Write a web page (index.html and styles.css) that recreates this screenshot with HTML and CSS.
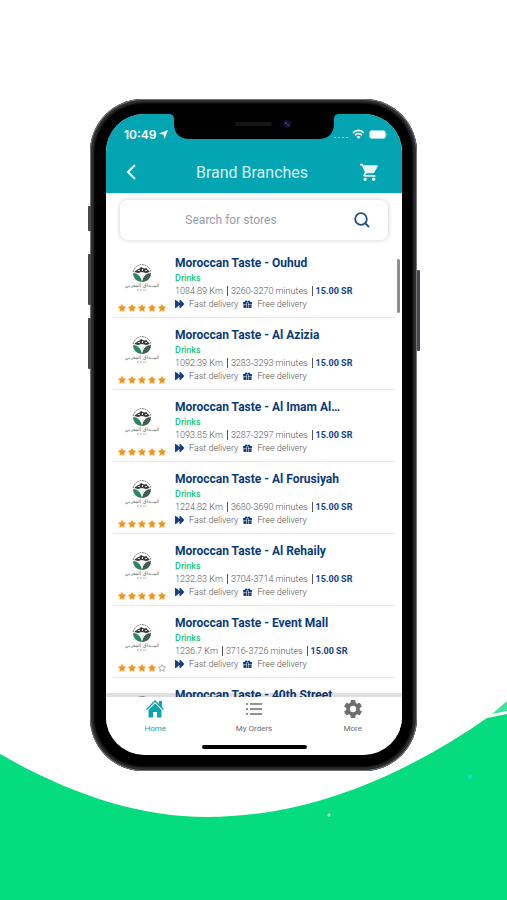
FILE: index.html
```
<!DOCTYPE html>
<html lang="en">
<head>
    <meta charset="UTF-8">
    <meta name="viewport" content="width=device-width, initial-scale=1.0">
    <title>Brand Branches</title>
    <link rel="stylesheet" href="styles.css">
</head>
<body>
    <!-- Shared icons -->
    <svg class="sprite" aria-hidden="true">
        <symbol id="star" viewBox="0 0 24 24">
            <path d="M12 1.5l3.2 7 7.6.8-5.7 5.1 1.6 7.5L12 18l-6.7 3.9 1.6-7.5L1.2 9.3l7.6-.8z" stroke-width="2"/>
        </symbol>
        <symbol id="fast" viewBox="0 0 18 16">
            <path d="M0 0h2l7 6V0h2l7 7v2l-7 7H9v-6l-7 6H0z"/>
        </symbol>
        <symbol id="gift" viewBox="0 0 18 16">
            <path d="M1 4h3C2 1 6-1 9 3c3-4 7-2 5 1h3c1 0 1 1 1 1v4h-7V5H7v4H0V5c0-1 1-1 1-1zM1 10h6v6H2c-1 0-1-1-1-1zM11 10h6v5s0 1-1 1h-5zM8 6h2v10H8z"/>
        </symbol>
        <symbol id="brand" viewBox="0 0 34 28">
            <path d="M8 9C11-1 23-1 26 9" fill="none" stroke="#8a8a8a" stroke-width="1" stroke-dasharray="2 .5"/>
            <path d="M9 9c2-1 3-3 5-3l2-2 3 1.500 2-.5 4 4-4 1-4-1-4 1z" fill="#3c3c3c"/>
            <path d="M13 7h2v1h-2zM17 6h1v2h-1zM20 7h2v1h-2z" fill="#ddd"/>
            <path d="M8 10c4 0 8 3 9 9-5 0-9-4-9-9z" fill="#2c8560"/>
            <path d="M26 10c-4 0-8 3-9 9 5 0 9-4 9-9z" fill="#3f5a50"/>
            <path d="M13 10.500c2 1 4 3 4 6M21 10.500c-2 1-4 3-4 6" fill="none" stroke="#dcebe4" stroke-width="1"/>
            <text x="17" y="24" text-anchor="middle" class="brand-name">المــذاق المغربي</text>
            <path d="M12 27h10" stroke="#aaa" stroke-width="1" stroke-dasharray="2 1"/>
        </symbol>
    </svg>

    <svg class="wave" viewBox="0 0 507 210" preserveAspectRatio="none" aria-hidden="true">
        <path d="M0 64C70 104 138 127 207 127C310 127 405 85 487 28L507 24V210H0Z" fill="#04dc7e"/>
        <path d="M492 24L507 11V21Z" fill="#3fe49b"/>
        <circle cx="329" cy="125" r="1.500" fill="#d9ffec"/>
        <circle cx="470" cy="87" r="2.500" fill="#04e6b0"/>
    </svg>

    <main class="phone">
        <span class="key key-mute"></span>
        <span class="key key-up"></span>
        <span class="key key-down"></span>
        <span class="key key-power"></span>
        <div class="screen">
            <svg class="notch" viewBox="0 0 170 25" aria-hidden="true">
                <path d="M0 0H170Q165 0 165 5V9Q165 25 149 25H21Q5 25 5 9V5Q5 0 0 0Z" fill="#000"/>
                <rect x="66" y="8" width="37" height="4" rx="2" fill="#161616"/>
                <circle cx="118" cy="10" r="4" fill="#10132c"/>
                <circle cx="117" cy="9" r="1" fill="#3f4c9c"/>
                <circle cx="119" cy="11" r="1" fill="#35418a"/>
            </svg>

            <header class="header">
                <div class="status-bar">
                    <span class="time">10:49
                        <svg width="9" height="9" viewBox="0 0 10 10"><path d="M10 0L6 10 5 5 0 4z" fill="#fff"/></svg>
                    </span>
                    <span class="signals">
                        <svg width="14" height="10" viewBox="0 0 14 10"><path d="M0 8.500h14" stroke="#7fd0d6" stroke-width="1" stroke-dasharray="2 2"/></svg>
                        <svg width="13" height="10" viewBox="0 0 13 10" fill="none" stroke="#fff" stroke-width="1.800"><path d="M1 4C4 .5 9 .5 12 4M3 6.200c2-2.200 5-2.200 7 0"/><path d="M6.500 10l-2-2.200c1-1 3-1 4 0z" fill="#fff" stroke="none"/></svg>
                        <svg width="19" height="9" viewBox="0 0 19 9"><rect x=".5" y=".5" width="16" height="8" rx="2.500" fill="#fff" stroke="#8fd8dc"/><path d="M17.500 3q1.500 1.500 0 3z" fill="#c5ecee"/></svg>
                    </span>
                </div>
                <div class="title-bar">
                    <button class="icon-button" aria-label="Back">
                        <svg width="10" height="16" viewBox="0 0 10 16"><path d="M9 1L2 8l7 7" fill="none" stroke="#e8fafa" stroke-width="2"/></svg>
                    </button>
                    <h1>Brand Branches</h1>
                    <button class="icon-button" aria-label="Cart">
                        <svg width="18" height="18" viewBox="1 1 21 21" fill="#e6f3f0"><path d="M7 18c-1.100 0-2 .9-2 2s.9 2 2 2 2-.9 2-2-.9-2-2-2zM1 2v2h2l3.600 7.600L5.200 14c-.8 1.400.2 3 1.800 3h12v-2H7.400l1.100-2h7.500c.7 0 1.400-.4 1.700-1L21.700 5c.3-.5 0-1-.7-1H5.200l-.9-2H1zm16 16c-1.100 0-2 .9-2 2s.9 2 2 2 2-.9 2-2-.9-2-2-2z"/><path d="M5 4h16l-4 8H8z"/></svg>
                    </button>
                </div>
            </header>

            <form class="search" onsubmit="event.preventDefault()">
                <input type="search" placeholder="Search for stores" aria-label="Search for stores">
                <button class="icon-button" aria-label="Search">
                    <svg width="16" height="16" viewBox="0 0 16 16" fill="none" stroke="#1d4f87" stroke-width="1.800"><circle cx="7" cy="7" r="5.800"/><path d="M11 11l4 4"/></svg>
                </button>
            </form>

            <div class="list-wrap">
                <ul class="branch-list" id="branch-list"></ul>
                <span class="scroll-thumb"></span>
            </div>

            <nav class="tabs">
                <a href="#home" class="active">
                    <svg width="18" height="18" viewBox="0 0 18 18" fill="currentColor"><path d="M9 0l4 4V1h3v6l2 2-1 1-8-8-8 8-1-1z"/><path d="M9 3.500l6.500 6.500v7.500H11V12H7v5.500H2.500V10z"/></svg>
                    Home
                </a>
                <a href="#orders">
                    <svg width="18" height="18" viewBox="0 0 18 18"><path d="M1 4h2M1 9h2M1 14h2M5 4h12M5 9h12M5 14h12" stroke="currentColor" stroke-width="1.400"/></svg>
                    My Orders
                </a>
                <a href="#more">
                    <svg width="18" height="18" viewBox="2 2 20 20" fill="currentColor"><path d="M19.430 12.980c.04-.32.070-.64.070-.98s-.03-.66-.07-.98l2.110-1.650c.19-.15.24-.42.120-.64l-2-3.460c-.12-.22-.39-.3-.61-.22l-2.490 1c-.52-.4-1.080-.73-1.690-.98l-.38-2.650A.49.49 0 0 0 14 2h-4c-.25 0-.46.18-.49.42l-.38 2.650c-.61.25-1.170.59-1.690.98l-2.490-1c-.23-.09-.49 0-.61.22l-2 3.460c-.13.22-.07.49.120.64l2.110 1.650c-.04.32-.07.65-.07.98s.03.66.070.98l-2.110 1.650c-.19.15-.24.42-.12.64l2 3.460c.12.22.39.3.61.22l2.490-1c.52.4 1.080.73 1.690.98l.38 2.650c.03.24.24.42.49.42h4c.25 0 .46-.18.49-.42l.38-2.650c.61-.25 1.170-.59 1.690-.98l2.490 1c.23.09.49 0 .61-.22l2-3.460c.12-.22.070-.49-.12-.64zM12 15.500a3.500 3.500 0 1 1 0-7 3.500 3.500 0 0 1 0 7z"/></svg>
                    More
                </a>
            </nav>
            <div class="home-bar"></div>
        </div>
    </main>

    <script>
        const branches = [
            { name: "Ouhud", distance: "1084.89", time: "3260-3270", stars: 5 },
            { name: "Al Azizia", distance: "1092.39", time: "3283-3293", stars: 5 },
            { name: "Al Imam Al…", distance: "1093.85", time: "3287-3297", stars: 5 },
            { name: "Al Forusiyah", distance: "1224.82", time: "3680-3690", stars: 5 },
            { name: "Al Rehaily", distance: "1232.83", time: "3704-3714", stars: 5 },
            { name: "Event Mall", distance: "1236.7", time: "3716-3726", stars: 4 },
            { name: "40th Street" }
        ];

        const branchList = document.getElementById('branch-list');

        function starIcons(count) {
            let html = '';
            for (let i = 1; i <= 5; i++) {
                html += `<svg class="${i <= count ? 'full' : 'empty'}"><use href="#star"/></svg>`;
            }
            return html;
        }

        function branchDetails(branch) {
            return `
                <p class="category">Drinks</p>
                <p class="meta"><span>${branch.distance} Km</span><span>${branch.time} minutes</span><strong>15.00 SR</strong></p>
                <p class="delivery">
                    <svg><use href="#fast"/></svg><span>Fast delivery</span>
                    <svg><use href="#gift"/></svg><span>Free delivery</span>
                </p>
            `;
        }

        branches.forEach(branch => {
            const li = document.createElement('li');
            li.className = 'branch';
            li.innerHTML = `
                <div class="brand">
                    <svg class="logo"><use href="#brand"/></svg>
                    <div class="stars" role="img" aria-label="${branch.stars || 0} of 5 stars">${starIcons(branch.stars)}</div>
                </div>
                <div class="info">
                    <h2>Moroccan Taste - ${branch.name}</h2>
                    ${branch.distance ? branchDetails(branch) : ''}
                </div>
            `;
            branchList.appendChild(li);
        });
    </script>
</body>
</html>
```
FILE: styles.css
```
* {
    box-sizing: border-box;
}
body {
    font-family: Roboto, "Liberation Sans", sans-serif;
    background-color: #fff;
    margin: 0;
    min-height: 100vh;
    padding: 99px 90px;
    position: relative;
}
h1, h2, p, ul {
    margin: 0;
    padding: 0;
}
svg {
    display: block;
    flex: none;
}
.sprite {
    position: absolute;
    width: 0;
    height: 0;
}
.wave {
    position: absolute;
    left: 0;
    bottom: 0;
    width: 100%;
    height: 210px;
}

/* Phone body */
.phone {
    position: relative;
    max-width: 360px;
    margin: 0 auto;
    padding: 15px 15px 16px 16px;
    border-radius: 53px;
    background-color: #000;
    box-shadow: inset 0 0 0 1px #737579, inset 0 0 2px 4px #2e2f31;
}
.key {
    position: absolute;
    left: -2px;
    width: 3px;
    border-radius: 1px;
    background-color: #47484b;
}
.key-mute {
    top: 107px;
    height: 25px;
}
.key-up {
    top: 155px;
    height: 51px;
}
.key-down {
    top: 219px;
    height: 51px;
}
.key-power {
    left: auto;
    right: -3px;
    top: 171px;
    height: 81px;
}
.screen {
    position: relative;
    overflow: hidden;
    border-radius: 38px;
    background-color: #fff;
}
.notch {
    position: absolute;
    top: 0;
    left: 50%;
    width: 170px;
    height: 25px;
    transform: translateX(-50%);
}

/* Header */
.icon-button {
    display: flex;
    padding: 0;
    border: none;
    background: none;
    cursor: pointer;
}
.header {
    background-color: #04a5b3;
    color: #fff;
}
.status-bar {
    display: flex;
    justify-content: space-between;
    align-items: center;
    height: 37px;
    padding: 3px 14px 0 18px;
}
.time {
    display: flex;
    align-items: center;
    gap: 3px;
    font-family: Inter, sans-serif;
    font-size: 12px;
    font-weight: 600;
}
.signals {
    display: flex;
    align-items: center;
    gap: 4px;
}
.title-bar {
    display: grid;
    grid-template-columns: 1fr auto 1fr;
    align-items: center;
    height: 42px;
    padding: 0 24px 0 20px;
}
.title-bar h1 {
    font-size: 16px;
    font-weight: 400;
    color: #d3f1f2;
}
.title-bar .icon-button:last-child {
    justify-self: end;
}

/* Search */
.search {
    display: flex;
    align-items: center;
    height: 40px;
    margin: 7px 14px 6px;
    padding-right: 18px;
    border-radius: 8px;
    background-color: #fff;
    box-shadow: 0 0 4px 1px #dcdcdc;
}
.search input {
    flex: 1;
    min-width: 0;
    height: 100%;
    padding: 0 16px;
    border: none;
    outline: none;
    background: none;
    font-family: inherit;
    font-size: 12px;
    text-align: center;
    color: #1d4f87;
}
.search input::placeholder {
    color: #969eac;
}

/* Branches */
.list-wrap {
    position: relative;
}
.branch-list {
    height: 451px;
    overflow: hidden;
    list-style-type: none;
}
.scroll-thumb {
    position: absolute;
    top: 13px;
    right: 2px;
    width: 3px;
    height: 54px;
    border-radius: 2px;
    background-color: #8e8e8e;
}
.branch {
    display: flex;
    gap: 9px;
    height: 72px;
    margin: 0 7px;
    padding: 9px 0 0 5px;
    border-bottom: 1px solid #e9e9e9;
}
.brand {
    display: flex;
    flex-direction: column;
    justify-content: space-between;
    align-items: center;
    width: 48px;
    padding: 8px 0 5px;
}
.logo {
    width: 34px;
    height: 28px;
}
.brand-name {
    font-family: "DejaVu Sans", sans-serif;
    font-size: 5px;
    fill: #666;
}
.stars {
    display: flex;
    gap: 2px;
}
.stars svg {
    width: 8px;
    height: 8px;
}
.stars .full {
    fill: #f39314;
    stroke: #f39314;
}
.stars .empty {
    fill: none;
    stroke: #888;
}
.info {
    flex: 1;
    min-width: 0;
    white-space: nowrap;
}
.info h2 {
    font-size: 12px;
    line-height: 16px;
    font-weight: 700;
    color: #0b3a78;
}
.category {
    font-size: 9px;
    line-height: 14px;
    font-weight: 500;
    color: #18c583;
}
.meta {
    display: flex;
    align-items: center;
    height: 12px;
    font-size: 9px;
    line-height: 10px;
    font-weight: 300;
    color: #555;
}
.meta span {
    padding-right: 4px;
    margin-right: 3px;
    border-right: 1px solid #555;
}
.meta strong {
    font-size: 9px;
    font-weight: 700;
    color: #12427f;
}
.delivery {
    display: flex;
    align-items: center;
    height: 13px;
    font-size: 9px;
    font-weight: 300;
    color: #555;
}
.delivery svg {
    width: 9px;
    height: 8px;
    fill: #12427f;
}
.delivery span {
    margin: 0 5px;
}

/* Bottom tabs, the translucent edge lies over the list */
.tabs {
    position: relative;
    display: flex;
    justify-content: space-between;
    margin-top: -4px;
    padding-top: 3px;
    border-top: 4px solid rgba(0, 0, 0, 0.12);
    background-color: #fff;
    background-clip: padding-box;
}
.tabs a {
    flex: 1;
    display: flex;
    flex-direction: column;
    align-items: center;
    gap: 5px;
    font-size: 8px;
    line-height: 12px;
    color: #6e6e6e;
    text-decoration: none;
}
.tabs .active {
    color: #08a6b2;
}
.home-bar {
    width: 105px;
    height: 4px;
    margin: 10px auto 6px;
    border-radius: 2px;
    background-color: #000;
}
```
